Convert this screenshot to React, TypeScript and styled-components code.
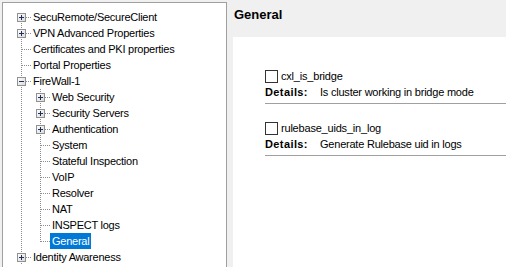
import React from "react";
import styled, { createGlobalStyle } from "styled-components";

const GlobalStyle = createGlobalStyle`
  html, body {
    margin: 0;
    padding: 0;
    background: #f0f0f0;
    overflow: hidden;
  }
  body {
    font-family: "Liberation Sans", Arial, sans-serif;
    font-size: 11px;
    color: #000;
  }
`;

const Window = styled.div`
  display: flex;
  width: 506px;
  height: 267px;
  overflow: hidden;
`;

const TreePanel = styled.div`
  margin: 2px 0 0 2px;
  width: 223px;
  height: 300px;
  flex: none;
  background: #fff;
  border: 1px solid #a0a0a0;
  border-bottom: none;
  padding-top: 6px;
  box-sizing: content-box;
`;

const TreeRow = styled.div`
  display: flex;
  align-items: stretch;
  height: 16px;
  padding-left: 9px;
`;

const GuideCell = styled.svg`
  display: block;
  width: 19px;
  height: 16px;
  flex: none;
`;

const NodeLabel = styled.span<{ $selected?: boolean }>`
  display: block;
  height: 16px;
  line-height: 16px;
  padding: 0 2px;
  white-space: nowrap;
  letter-spacing: -0.25px;
  background: ${(p) => (p.$selected ? "#0078d7" : "transparent")};
  color: ${(p) => (p.$selected ? "#fff" : "#000")};
`;

const RightPane = styled.div`
  flex: 1;
  display: flex;
  flex-direction: column;
  padding-left: 6px;
  min-width: 0;
`;

const Header = styled.div`
  height: 37px;
  box-sizing: border-box;
  padding: 7px 0 0 1px;
  font-size: 13px;
  line-height: 16px;
  font-weight: bold;
`;

const Content = styled.div`
  flex: 1;
  background: #fff;
  padding: 31px 0 0 32px;
`;

const Block = styled.div`
  margin-bottom: 16px;
`;

const CheckRow = styled.label`
  display: flex;
  align-items: center;
  height: 16px;
  line-height: 16px;
  letter-spacing: -0.2px;
`;

const CheckBox = styled.span`
  display: block;
  width: 11px;
  height: 11px;
  border: 1px solid #333;
  background: #fff;
  margin-right: 3px;
  margin-top: 1px;
`;

const DetailsRow = styled.div`
  display: flex;
  height: 16px;
  line-height: 16px;
  white-space: nowrap;
`;

const DetailsLabel = styled.span`
  width: 55px;
  font-weight: bold;
  letter-spacing: 0.4px;
`;

const DetailsValue = styled.span`
  letter-spacing: -0.22px;
`;

const Separator = styled.div`
  margin-top: 3px;
  height: 1px;
  background: #a0a0a0;
`;

type Vert = "full" | "top" | "bottom" | "none";

const LINE = "#8c8c8c";

function Guide({
  vertical,
  horizontal,
  expander,
}: {
  vertical: Vert;
  horizontal?: boolean;
  expander?: "plus" | "minus";
}) {
  const vy1 = vertical === "bottom" ? 8 : 0;
  const vy2 = vertical === "top" ? 9 : 16;
  return (
    <GuideCell viewBox="0 0 19 16">
      <defs>
        <linearGradient id="expg" x1="0" y1="0" x2="1" y2="1">
          <stop offset="0" stopColor="#ffffff" />
          <stop offset="1" stopColor="#d8d8d8" />
        </linearGradient>
      </defs>
      {vertical !== "none" && (
        <line
          x1={9.5}
          y1={vy1}
          x2={9.5}
          y2={vy2}
          stroke={LINE}
          strokeWidth={1}
          strokeDasharray="1 1"
        />
      )}
      {horizontal && (
        <line
          x1={expander ? 14 : 10}
          y1={8.5}
          x2={19}
          y2={8.5}
          stroke={LINE}
          strokeWidth={1}
          strokeDasharray="1 1"
        />
      )}
      {expander && (
        <g>
          <rect
            x={5.5}
            y={4.5}
            width={8}
            height={8}
            fill="url(#expg)"
            stroke="#919191"
            strokeWidth={1}
          />
          <line x1={7} y1={8.5} x2={12} y2={8.5} stroke="#1e2f5a" strokeWidth={1} />
          {expander === "plus" && (
            <line x1={9.5} y1={6} x2={9.5} y2={11} stroke="#1e2f5a" strokeWidth={1} />
          )}
        </g>
      )}
    </GuideCell>
  );
}

type Node = {
  label: string;
  level: 1 | 2;
  exp?: "plus" | "minus";
  selected?: boolean;
  vert: Vert;
};

const nodes: Node[] = [
  { label: "SecuRemote/SecureClient", level: 1, exp: "plus", vert: "bottom" },
  { label: "VPN Advanced Properties", level: 1, exp: "plus", vert: "full" },
  { label: "Certificates and PKI properties", level: 1, vert: "full" },
  { label: "Portal Properties", level: 1, vert: "full" },
  { label: "FireWall-1", level: 1, exp: "minus", vert: "full" },
  { label: "Web Security", level: 2, exp: "plus", vert: "full" },
  { label: "Security Servers", level: 2, exp: "plus", vert: "full" },
  { label: "Authentication", level: 2, exp: "plus", vert: "full" },
  { label: "System", level: 2, vert: "full" },
  { label: "Stateful Inspection", level: 2, vert: "full" },
  { label: "VoIP", level: 2, vert: "full" },
  { label: "Resolver", level: 2, vert: "full" },
  { label: "NAT", level: 2, vert: "full" },
  { label: "INSPECT logs", level: 2, vert: "full" },
  { label: "General", level: 2, vert: "top", selected: true },
  { label: "Identity Awareness", level: 1, exp: "plus", vert: "full" },
];

const settings = [
  { name: "cxl_is_bridge", details: "Is cluster working in bridge mode" },
  { name: "rulebase_uids_in_log", details: "Generate Rulebase uid in logs" },
];

export default function App() {
  return (
    <>
      <GlobalStyle />
      <Window>
        <TreePanel>
          {nodes.map((n) => (
            <TreeRow key={n.label}>
              {n.level === 2 && <Guide vertical="full" />}
              <Guide vertical={n.vert} horizontal expander={n.exp} />
              <NodeLabel $selected={n.selected}>{n.label}</NodeLabel>
            </TreeRow>
          ))}
        </TreePanel>
        <RightPane>
          <Header>General</Header>
          <Content>
            {settings.map((s) => (
              <Block key={s.name}>
                <CheckRow>
                  <CheckBox />
                  {s.name}
                </CheckRow>
                <DetailsRow>
                  <DetailsLabel>Details:</DetailsLabel>
                  <DetailsValue>{s.details}</DetailsValue>
                </DetailsRow>
                <Separator />
              </Block>
            ))}
          </Content>
        </RightPane>
      </Window>
    </>
  );
}
